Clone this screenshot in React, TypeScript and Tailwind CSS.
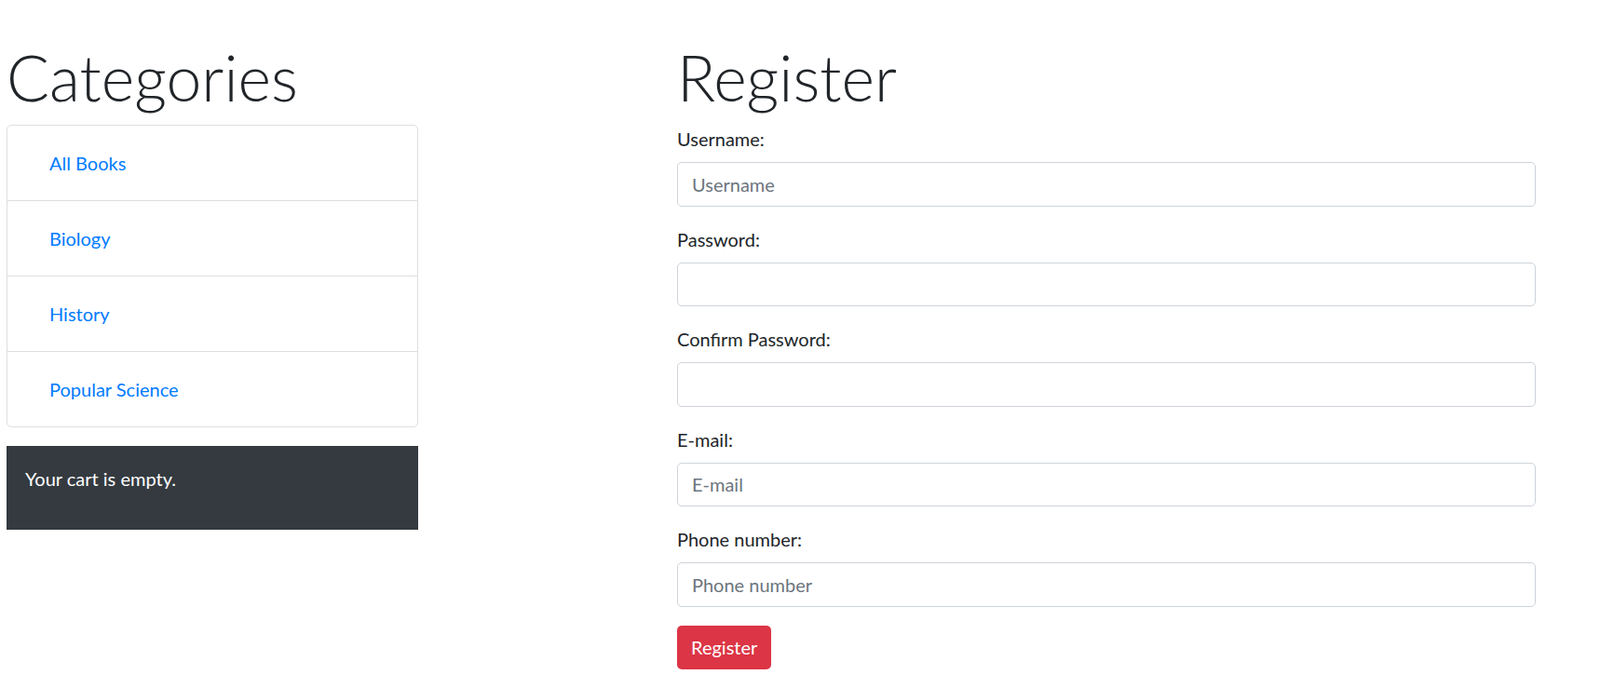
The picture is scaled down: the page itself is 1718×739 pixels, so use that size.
const categories = ["All Books", "Biology", "History", "Popular Science"];

const fields = [
  { label: "Username:", placeholder: "Username", type: "text" },
  { label: "Password:", placeholder: "", type: "password" },
  { label: "Confirm Password:", placeholder: "", type: "password" },
  { label: "E-mail:", placeholder: "E-mail", type: "email" },
  { label: "Phone number:", placeholder: "Phone number", type: "text" },
];

function Field({ label, placeholder, type }: { label: string; placeholder: string; type: string }) {
  return (
    <div className="mb-[20px]">
      <label className="mb-[10px] block leading-[30px]">{label}</label>
      <input
        type={type}
        placeholder={placeholder}
        className="block h-[47.5px] w-full rounded-[5px] border border-[#ced4da] bg-white px-[15px] text-[20px] text-[#495057] placeholder:text-[#6c757d] outline-none"
      />
    </div>
  );
}

export default function App() {
  return (
    <div className="flex min-h-screen bg-white pt-[40px] text-[20px] leading-[30px] text-[#212529] [font-family:'Segoe_UI',Lato,'Noto_Sans',sans-serif]">
      <div className="ml-[7px] w-[442px] shrink-0">
        <h1 className="mb-[10px] pt-[2px] text-[68px] font-light leading-[82px]">Categories</h1>
        <ul className="rounded-[5px] border border-[#dfdfdf]">
          {categories.map((c) => (
            <li key={c} className="border-b border-[#dfdfdf] px-[25px] py-[15px] last:border-b-0">
              <a href="#" className="block px-[20px] py-[10px] text-[#007bff]">
                {c}
              </a>
            </li>
          ))}
        </ul>
        <div className="mt-[20px] bg-[#343a40] p-[20px] text-white">
          <p className="mb-[20px]">Your cart is empty.</p>
        </div>
      </div>

      <div className="ml-[278px] w-[922px] shrink-0">
        <h1 className="mb-[10px] pt-[2px] text-[68px] font-light leading-[82px]">Register</h1>
        <form>
          {fields.map((f) => (
            <Field key={f.label} {...f} />
          ))}
          <button
            type="button"
            className="h-[47.5px] rounded-[5px] bg-[#dc3545] px-[15px] text-[20px] text-white"
          >
            Register
          </button>
        </form>
      </div>
    </div>
  );
}
